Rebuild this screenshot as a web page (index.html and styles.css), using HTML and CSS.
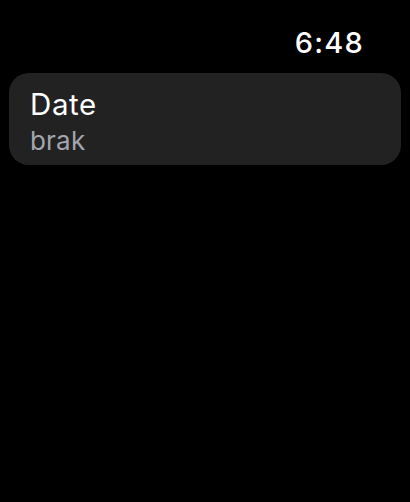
FILE: index.html
```html
<!DOCTYPE html>
<html>
<head>
<meta charset="utf-8">
<link rel="stylesheet" href="styles.css">
</head>
<body>
<div class="screen">
  <div class="status">
    <span class="time">6:48</span>
  </div>
  <div class="list">
    <div class="cell">
      <div class="title">Date</div>
      <div class="subtitle">brak</div>
    </div>
  </div>
</div>
</body>
</html>
```
FILE: styles.css
```css
html, body {
  margin: 0;
  padding: 0;
  background: #000;
  width: 410px;
  height: 502px;
  overflow: hidden;
}
.screen {
  font-family: Inter, "Noto Sans", sans-serif;
  color: #fff;
}
.status {
  display: flex;
  justify-content: flex-end;
  padding: 26px 46px 0 0;
  height: 46px;
  box-sizing: border-box;
}
.time {
  font-size: 29px;
  font-weight: 500;
  line-height: 34px;
  letter-spacing: 1.2px;
}
.list {
  padding: 27px 9px 0 9px;
}
.cell {
  background: #222222;
  border-radius: 20px;
  height: 92px;
  box-sizing: border-box;
  padding: 12px 20px 0 21px;
}
.title {
  font-size: 29.5px;
  line-height: 38px;
  font-weight: 400;
  letter-spacing: 0.6px;
  color: #fff;
}
.subtitle {
  font-size: 26px;
  line-height: 34px;
  letter-spacing: 0.2px;
  margin-top: 1px;
  color: #a2a5ae;
}
```
